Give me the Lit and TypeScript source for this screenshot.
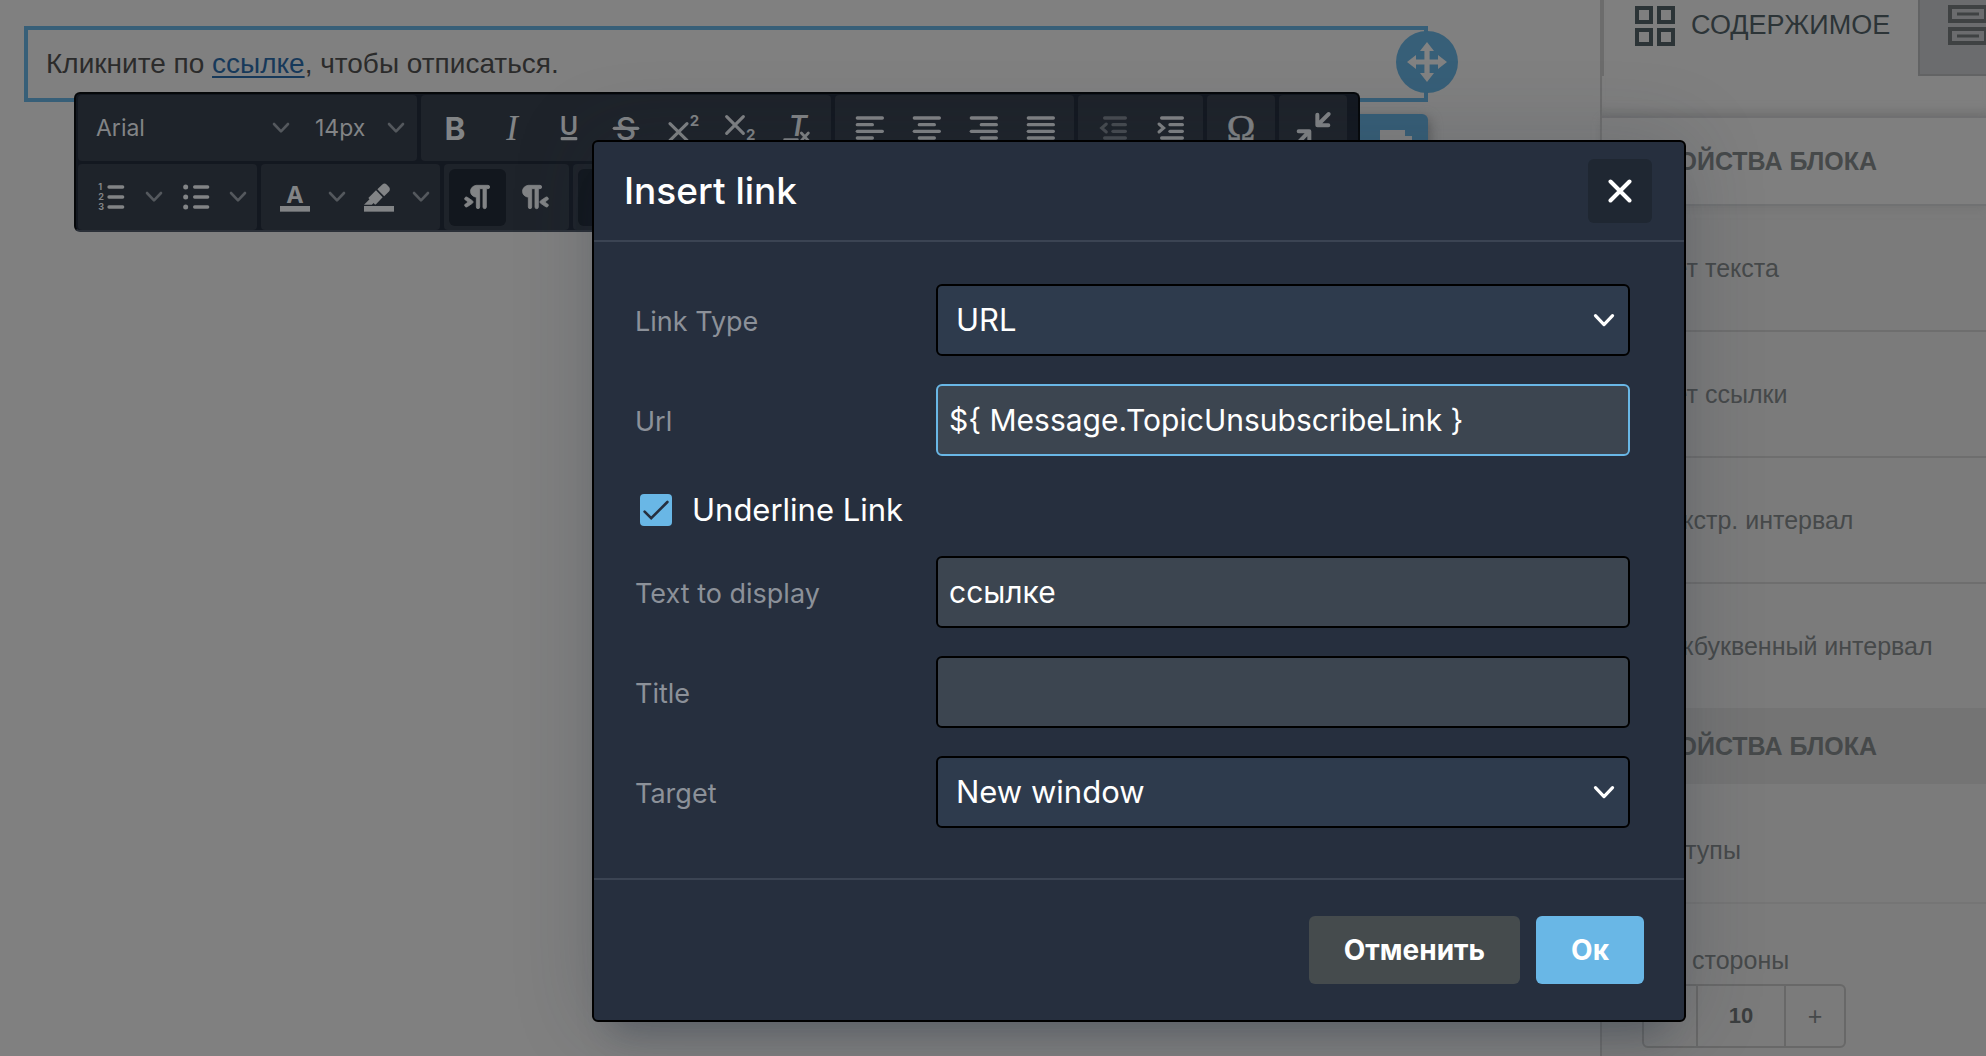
import { LitElement, html, svg, css, nothing } from 'lit';
import { customElement, property, state } from 'lit/decorators.js';

const bars = (rows: number[][]) => svg`<g stroke="currentColor" stroke-width="2" stroke-linecap="round">
  ${rows.map(([x1, x2, y]) => svg`<line x1=${x1} x2=${x2} y1=${y} y2=${y}></line>`)}
</g>`;

const ICONS: Record<string, unknown> = {
  bold: svg`<text x="12" y="19" font-size="19" font-weight="700" text-anchor="middle">B</text>`,
  italic: svg`<text class="serif" x="12" y="19" font-size="21" font-style="italic" text-anchor="middle">I</text>`,
  underline: svg`<text x="12" y="16" font-size="15" font-weight="600" text-anchor="middle">U</text>
    <rect x="7" y="17.4" width="10" height="2" rx="0.6"></rect>`,
  strike: svg`<text x="12" y="19" font-size="19" font-weight="500" text-anchor="middle">S</text>
    <rect x="4" y="11.2" width="16" height="2" rx="1"></rect>`,
  superscript: svg`<path d="M4.2 9.4l10.2 10M14.4 9.4l-10.2 10" stroke="currentColor" stroke-width="1.9" stroke-linecap="round"></path>
    <text x="16" y="11" font-size="9" font-weight="700">2</text>`,
  subscript: svg`<path d="M4 5.2l10 10M14 5.2l-10 10" stroke="currentColor" stroke-width="1.9" stroke-linecap="round"></path>
    <text x="15.6" y="19.2" font-size="9" font-weight="700">2</text>`,
  clear: svg`<text x="12.5" y="17" font-size="17" font-style="italic" font-weight="600" text-anchor="middle">T</text>
    <path d="M4.6 19h7.6M14.6 15l4.2 4.6M18.8 15l-4.2 4.6" stroke="currentColor" stroke-width="1.7" stroke-linecap="round"></path>`,
  left: bars([[5, 20, 6], [5, 14, 10], [5, 20, 14], [5, 14, 18]]),
  center: bars([[5, 20, 6], [8, 17, 10], [5, 20, 14], [8, 17, 18]]),
  right: bars([[5, 20, 6], [11, 20, 10], [5, 20, 14], [11, 20, 18]]),
  justify: bars([[5, 20, 6], [5, 20, 10], [5, 20, 14], [5, 20, 18]]),
  outdent: svg`${bars([[7.6, 20, 6], [12.6, 20, 10], [12.6, 20, 14], [7.6, 20, 18]])}
    <path d="M8.6 9.6L5.8 12l2.8 2.4" fill="none" stroke="currentColor" stroke-width="1.8" stroke-linecap="round"></path>`,
  indent: svg`${bars([[7.6, 20, 6], [12.6, 20, 10], [12.6, 20, 14], [7.6, 20, 18]])}
    <path d="M6 9.6L8.8 12 6 14.4" fill="none" stroke="currentColor" stroke-width="1.8" stroke-linecap="round"></path>`,
  omega: svg`<text class="serif" x="12" y="19.8" font-size="23" text-anchor="middle" stroke="currentColor" stroke-width="0.4">Ω</text>`,
  shrink: svg`<path d="M14.6 4v6.4h6.6M14.8 10.2L21.4 3.6M3.4 14h6.4v6.6M9.6 14.2L3 21" fill="none" stroke="currentColor" stroke-width="2.4" stroke-linecap="round" stroke-linejoin="round"></path>`,
  numbered: svg`${bars([[10.2, 18.4, 6], [10.2, 18.4, 12], [10.2, 18.4, 18]])}
    <text x="3.8" y="8" font-size="5.4" font-weight="700">1</text>
    <text x="3.8" y="14" font-size="5.4" font-weight="700">2</text>
    <text x="3.8" y="20" font-size="5.4" font-weight="700">3</text>`,
  bullets: svg`${bars([[11.2, 19, 6], [11.2, 19, 12], [11.2, 19, 18]])}
    <circle cx="5.8" cy="6" r="1.5"></circle><circle cx="5.8" cy="12" r="1.5"></circle><circle cx="5.8" cy="18" r="1.5"></circle>`,
  color: svg`<text x="12" y="15.4" font-size="14" font-weight="700" text-anchor="middle">A</text>
    <rect x="3" y="17.4" width="18" height="3.4"></rect>`,
  marker: svg`<path d="M7.7 16.7H3l3.3-3.3-.7-.8L10.2 8l4 4.1-4 4.2c-.2.2-.6.2-.8 0l-.6-.7-1.1 1.1zm5-7.5L11 7.4l3-2.9a2 2 0 012.6 0L18 6c.7.7.7 2 0 2.7l-2.9 2.9-2.4-2.4z"></path>
    <rect x="3" y="17.4" width="18" height="3.4"></rect>`,
  ltr: svg`<path d="M11 5h7a1 1 0 010 2h-1v11a1 1 0 01-2 0V7h-2v11a1 1 0 01-2 0v-6c-.5 0-1 0-1.4-.3A3.4 3.4 0 017.8 10a3.3 3.3 0 010-2.8 3.4 3.4 0 011.8-1.8L11 5zM4.4 16.2L6.2 15l-1.8-1.2a1 1 0 011.2-1.6l3 2a1 1 0 010 1.6l-3 2a1 1 0 11-1.2-1.6z" stroke="currentColor" stroke-width="0.5"></path>`,
  rtl: svg`<path d="M8 5h7a1 1 0 010 2h-1v11a1 1 0 01-2 0V7h-2v11a1 1 0 01-2 0v-6c-.5 0-1 0-1.4-.3A3.4 3.4 0 014.8 10a3.3 3.3 0 010-2.8 3.4 3.4 0 011.8-1.8L8 5zm11.6 11.2a1 1 0 11-1.2 1.6l-3-2a1 1 0 010-1.6l3-2a1 1 0 111.2 1.6L17.8 15l1.8 1.2z" stroke="currentColor" stroke-width="0.5"></path>`,
  link: svg`<path d="M10 14l4-4M9 11l-3 3a3 3 0 004 4l3-3M11 9l3-3a3 3 0 014 4l-3 3" fill="none" stroke="currentColor" stroke-width="2" stroke-linecap="round"></path>`,
};

const chevron = (cls: string) => html`<svg class=${cls} viewBox="0 0 18 12" aria-hidden="true">
  <path d="M2 2l7 7.4L16 2" fill="none" stroke="currentColor" stroke-width="2.6" stroke-linecap="round" stroke-linejoin="round"></path>
</svg>`;

interface Tool {
  icon: string;
  label: string;
  split?: boolean;
  active?: boolean;
  disabled?: boolean;
}

const TOP_GROUPS: Tool[][] = [
  [
    { icon: 'bold', label: 'Bold' },
    { icon: 'italic', label: 'Italic' },
    { icon: 'underline', label: 'Underline' },
    { icon: 'strike', label: 'Strikethrough' },
    { icon: 'superscript', label: 'Superscript' },
    { icon: 'subscript', label: 'Subscript' },
    { icon: 'clear', label: 'Clear formatting' },
  ],
  [
    { icon: 'left', label: 'Align left' },
    { icon: 'center', label: 'Align center' },
    { icon: 'right', label: 'Align right' },
    { icon: 'justify', label: 'Justify' },
  ],
  [
    { icon: 'outdent', label: 'Decrease indent', disabled: true },
    { icon: 'indent', label: 'Increase indent' },
  ],
  [{ icon: 'omega', label: 'Special character' }],
  [{ icon: 'shrink', label: 'Collapse' }],
];

const BOTTOM_GROUPS: Tool[][] = [
  [
    { icon: 'numbered', label: 'Numbered list', split: true },
    { icon: 'bullets', label: 'Bullet list', split: true },
  ],
  [
    { icon: 'color', label: 'Text color', split: true },
    { icon: 'marker', label: 'Background color', split: true },
  ],
  [
    { icon: 'ltr', label: 'Left to right', active: true },
    { icon: 'rtl', label: 'Right to left' },
  ],
  [{ icon: 'link', label: 'Link', active: true }],
];

@customElement('editor-toolbar')
export class EditorToolbar extends LitElement {
  static styles = css`
    :host {
      display: block;
      width: max-content;
      padding: 1px 11px 0 2px;
      border: 2px solid #050709;
      border-bottom-color: #2b3038;
      border-radius: 6px;
      background: #131820;
      color: #828486;
      font-family: Inter, 'Liberation Sans', sans-serif;
    }
    .row {
      display: flex;
      gap: 4px;
      margin-bottom: 3px;
    }
    .row:last-child {
      margin-bottom: 0;
    }
    .group {
      display: flex;
      align-items: center;
      height: 66px;
      padding: 0 6px 0 5px;
      border-radius: 4px;
      background: #1e232a;
    }
    .fonts {
      width: 328px;
    }
    button {
      display: flex;
      align-items: center;
      justify-content: center;
      height: 57px;
      padding: 0;
      border: 0;
      border-radius: 6px;
      background: none;
      color: inherit;
      font: inherit;
    }
    .tool {
      width: 57px;
    }
    .more {
      width: 27px;
    }
    .active {
      background: #12171e;
    }
    .disabled {
      color: #484c51;
    }
    .pick {
      justify-content: space-between;
      font-size: 23px;
      line-height: 32px;
    }
    .family {
      width: 217px;
      padding: 0 10px 0 13px;
    }
    .size {
      width: 111px;
      padding: 0 6px 0 15px;
    }
    .icon {
      width: 40px;
      height: 40px;
      fill: currentColor;
    }
    .serif {
      font-family: 'Liberation Serif', serif;
    }
    .chevron {
      width: 18px;
      height: 12px;
      color: #54585d;
    }
  `;

  private tool(t: Tool) {
    return html`<button
        class="tool ${t.active ? 'active' : ''} ${t.disabled ? 'disabled' : ''}"
        aria-label=${t.label}
        ?disabled=${t.disabled}
      >
        <svg class="icon" viewBox="0 0 24 24" aria-hidden="true">${ICONS[t.icon]}</svg>
      </button>
      ${t.split
        ? html`<button class="more" aria-label="${t.label} options">${chevron('chevron')}</button>`
        : nothing}`;
  }

  private groups(list: Tool[][]) {
    return list.map((g) => html`<div class="group">${g.map((t) => this.tool(t))}</div>`);
  }

  render() {
    return html`
      <div class="row">
        <div class="group fonts">
          <button class="pick family">Arial ${chevron('chevron')}</button>
          <button class="pick size">14px ${chevron('chevron')}</button>
        </div>
        ${this.groups(TOP_GROUPS)}
      </div>
      <div class="row">${this.groups(BOTTOM_GROUPS)}</div>
    `;
  }
}

@customElement('settings-panel')
export class SettingsPanel extends LitElement {
  static styles = css`
    :host {
      display: block;
      border-left: 2px solid #6c6c6c;
      background: #7b7b7b;
      color: #46494a;
      font: 25px/32px 'Liberation Sans', Arial, sans-serif;
    }
    .tabs {
      display: flex;
      height: 116px;
      overflow: hidden;
      background: #7f7f7f;
      border-bottom: 2px solid #6f6f71;
      box-shadow: inset 0 -12px 12px -10px #6c6c6c;
    }
    .tab {
      display: flex;
      flex: none;
      align-items: center;
      gap: 16px;
      box-sizing: border-box;
      height: 76px;
      padding: 0 28px 26px 31px;
      border: 0;
      border-left: 2px solid #6c6c6c;
      background: none;
      color: #2c3437;
      font: 27px/32px 'Liberation Sans', Arial, sans-serif;
    }
    .tab.other {
      padding-left: 28px;
      border-bottom: 2px solid #626364;
      border-left-color: #626364;
      background: #6b6c6e;
      color: #3f4243;
    }
    .tab-icon {
      width: 40px;
      height: 40px;
      margin-top: 2px;
    }
    h2 {
      display: flex;
      align-items: center;
      height: 76px;
      margin: 0;
      padding-left: 40px;
      background: #747474;
      font-size: 25px;
      line-height: 32px;
      font-weight: 700;
    }
    h2.raised {
      height: 86px;
      border-bottom: 2px solid #707172;
      background: #7f7f7f;
      box-shadow: 0 2px 8px #747474;
    }
    .row {
      display: flex;
      align-items: center;
      height: 124px;
      padding-left: 40px;
      border-bottom: 2px solid #6e6e6e;
    }
    .row.last {
      border-bottom: 0;
    }
    .row.spacing {
      height: 104px;
      padding-top: 14px;
      border-bottom-color: #757575;
    }
    .sides {
      padding: 40px 0 8px 40px;
    }
    .stepper {
      display: flex;
      width: 204px;
      height: 64px;
      margin-top: 8px;
      box-sizing: border-box;
      border: 2px solid #686868;
      border-radius: 6px;
    }
    .stepper button {
      width: 58px;
      padding: 0;
      border: 0;
      background: none;
      color: inherit;
      font: inherit;
    }
    .stepper .minus {
      width: 52px;
    }
    .stepper input {
      flex: 1;
      min-width: 0;
      padding: 0;
      border: solid #686868;
      border-width: 0 2px;
      border-radius: 0;
      background: none;
      color: #3b3e3f;
      font: 700 22px/32px 'Liberation Sans', Arial, sans-serif;
      text-align: center;
    }
  `;

  render() {
    return html`
      <div class="tabs" role="tablist">
        <button class="tab" role="tab" aria-selected="true">
          <svg class="tab-icon" viewBox="0 0 40 40" fill="none" stroke="currentColor" stroke-width="4" aria-hidden="true">
            <rect x="2" y="2" width="14" height="14"></rect>
            <rect x="24" y="2" width="14" height="14"></rect>
            <rect x="2" y="24" width="14" height="14"></rect>
            <rect x="24" y="24" width="14" height="14"></rect>
          </svg>
          СОДЕРЖИМОЕ
        </button>
        <button class="tab other" role="tab" aria-selected="false" aria-label="Rows">
          <svg class="tab-icon" viewBox="0 0 40 40" fill="none" stroke="currentColor" stroke-width="4" aria-hidden="true">
            <rect x="2" y="2" width="36" height="14"></rect>
            <rect x="2" y="24" width="36" height="14"></rect>
            <path d="M9 9h22M9 31h22" stroke-width="3"></path>
          </svg>
        </button>
      </div>
      <h2 class="raised">СВОЙСТВА БЛОКА</h2>
      <div class="row">Цвет текста</div>
      <div class="row">Цвет ссылки</div>
      <div class="row">Межстр. интервал</div>
      <div class="row last">Межбуквенный интервал</div>
      <h2>СВОЙСТВА БЛОКА</h2>
      <div class="row spacing">Отступы</div>
      <div class="sides">
        <label for="sides">Все стороны</label>
        <div class="stepper">
          <button class="minus" aria-label="Decrease">−</button>
          <input id="sides" value="10" />
          <button aria-label="Increase">+</button>
        </div>
      </div>
    `;
  }
}

@customElement('link-dialog')
export class LinkDialog extends LitElement {
  @property() url = '';
  @property() text = '';
  @state() private underline = true;

  static styles = css`
    :host {
      display: block;
      overflow: hidden;
      box-sizing: border-box;
      border: 2px solid #000;
      border-radius: 6px;
      background: #262f3e;
      color: #fff;
      font: 31px/40px Inter, 'Liberation Sans', sans-serif;
      box-shadow:
        0 32px 32px -20px rgba(34, 47, 62, 0.3),
        0 0 80px 2px rgba(34, 47, 62, 0.2);
    }
    header {
      display: flex;
      align-items: center;
      justify-content: space-between;
      height: 98px;
      padding: 0 32px 0 30px;
      border-bottom: 2px solid #3b4453;
    }
    h1 {
      margin: 0;
      font-size: 37px;
      line-height: 48px;
      font-weight: 500;
    }
    .close {
      display: flex;
      align-items: center;
      justify-content: center;
      width: 64px;
      height: 64px;
      padding: 0;
      border: 0;
      border-radius: 6px;
      background: #1f2732;
      color: #fff;
    }
    .cross {
      width: 24px;
      height: 24px;
    }
    .body {
      padding: 42px 54px 22px 41px;
    }
    .field {
      display: grid;
      grid-template-columns: 301px 1fr;
      align-items: center;
      margin-bottom: 28px;
    }
    .name {
      padding-top: 4px;
      color: #8c9199;
      font-size: 27px;
    }
    .box {
      display: grid;
      align-items: center;
    }
    .control {
      box-sizing: border-box;
      width: 100%;
      height: 72px;
      margin: 0;
      padding: 0 11px;
      border: 2px solid #000;
      border-radius: 6px;
      outline: 0;
      background: #3c4550;
      color: #fff;
      font: 30px/40px Inter, 'Liberation Sans', sans-serif;
    }
    .control.current {
      border-color: #69b7e6;
    }
    select.control {
      grid-area: 1 / 1;
      padding: 0 18px;
      appearance: none;
      background: #2e3b4d;
      font-size: 31px;
    }
    .arrow {
      grid-area: 1 / 1;
      justify-self: end;
      width: 22px;
      height: 15px;
      margin-right: 15px;
      pointer-events: none;
    }
    .check {
      display: flex;
      align-items: center;
      gap: 20px;
      height: 52px;
      margin-bottom: 20px;
      padding-left: 5px;
    }
    .tick-box {
      display: grid;
      width: 32px;
      height: 32px;
    }
    .tick-box input {
      grid-area: 1 / 1;
      width: 32px;
      height: 32px;
      margin: 0;
      border-radius: 4px;
      appearance: none;
      background: #3c4550;
    }
    .tick-box input:checked {
      background: #69b7e6;
    }
    .tick {
      grid-area: 1 / 1;
      width: 32px;
      height: 32px;
      pointer-events: none;
    }
    footer {
      display: flex;
      justify-content: flex-end;
      gap: 16px;
      padding: 36px 40px;
      border-top: 2px solid #3b4453;
    }
    .action {
      height: 68px;
      padding: 0 35px;
      border: 0;
      border-radius: 6px;
      background: #454b4d;
      color: #fff;
      font: 700 28px/40px Inter, 'Liberation Sans', sans-serif;
    }
    .primary {
      background: #69b7e6;
    }
  `;

  private selectField(id: string, name: string, value: string) {
    return html`<div class="field">
      <label class="name" for=${id}>${name}</label>
      <div class="box">
        <select class="control" id=${id}>
          <option>${value}</option>
        </select>
        ${chevron('arrow')}
      </div>
    </div>`;
  }

  private textField(id: string, name: string, value: string, current = false) {
    return html`<div class="field">
      <label class="name" for=${id}>${name}</label>
      <input class="control ${current ? 'current' : ''}" id=${id} type="text" .value=${value} />
    </div>`;
  }

  render() {
    return html`
      <header>
        <h1>Insert link</h1>
        <button class="close" aria-label="Close">
          <svg class="cross" viewBox="0 0 24 24" aria-hidden="true">
            <path d="M2.5 2.5l19 19M21.5 2.5l-19 19" stroke="currentColor" stroke-width="4" stroke-linecap="round"></path>
          </svg>
        </button>
      </header>
      <div class="body">
        ${this.selectField('type', 'Link Type', 'URL')}
        ${this.textField('url', 'Url', this.url, true)}
        <label class="check">
          <span class="tick-box">
            <input
              type="checkbox"
              .checked=${this.underline}
              @change=${() => (this.underline = !this.underline)}
            />
            ${this.underline
              ? html`<svg class="tick" viewBox="0 0 32 32" aria-hidden="true">
                  <path d="M4.6 17.6l6.6 6.6L27.4 8" fill="none" stroke="#262f3e" stroke-width="2.6" stroke-linecap="round"></path>
                </svg>`
              : nothing}
          </span>
          Underline Link
        </label>
        ${this.textField('text', 'Text to display', this.text)}
        ${this.textField('title', 'Title', '')}
        ${this.selectField('target', 'Target', 'New window')}
      </div>
      <footer>
        <button class="action">Отменить</button>
        <button class="action primary">Ок</button>
      </footer>
    `;
  }
}

@customElement('app-root')
export class AppRoot extends LitElement {
  static styles = css`
    :host {
      display: block;
    }
    .page {
      position: relative;
      display: grid;
      grid-template-columns: 1fr 386px;
      min-height: 100vh;
      overflow: hidden;
      background: #808080;
    }
    .canvas {
      padding: 26px 172px 0 24px;
    }
    .block {
      position: relative;
      padding: 16px 18px;
      border: 4px solid #375f78;
      color: #2b2b2b;
      font: 28px/36px 'Liberation Sans', Arial, sans-serif;
    }
    .block p {
      margin: 0;
    }
    .block a {
      color: #17395a;
      text-decoration-thickness: 2px;
      text-underline-offset: 3px;
    }
    .move {
      position: absolute;
      top: 1px;
      right: -34px;
      width: 62px;
      height: 62px;
      padding: 0;
      border: 0;
      border-radius: 50%;
      background: #375f78;
      color: #828282;
    }
    .actions {
      position: absolute;
      top: 84px;
      right: -4px;
      width: 96px;
      height: 60px;
      padding: 16px 16px 12px 48px;
      box-sizing: border-box;
      border: 0;
      border-radius: 6px;
      background: #375f78;
      color: #828282;
      box-shadow: 2px 4px 12px #5c5c5c;
    }
    .glyph {
      display: block;
      width: 100%;
    }
    .toolbar {
      position: absolute;
      top: 92px;
      left: 74px;
    }
    .dialog {
      position: absolute;
      top: 140px;
      right: 300px;
      left: 592px;
    }
  `;

  render() {
    return html`
      <div class="page">
        <main class="canvas">
          <div class="block">
            <p>Кликните по <a href="#unsubscribe">ссылке</a>, чтобы отписаться.</p>
            <button class="move" aria-label="Move block">
              <svg class="glyph" viewBox="0 0 62 62" fill="currentColor" aria-hidden="true">
                <path d="M31 11l7 9h-4.4v8.4H42V24l9 7-9 7v-4.4h-8.4V42H38l-7 9-7-9h4.4v-8.4H20V38l-9-7 9-7v4.4h8.4V20H24z"></path>
              </svg>
            </button>
            <button class="actions" aria-label="Duplicate block">
              <svg class="glyph" viewBox="0 0 32 32" fill="currentColor" aria-hidden="true">
                <path d="M0 0h25v6h7v26H8v-8H0z"></path>
              </svg>
            </button>
          </div>
        </main>
        <settings-panel></settings-panel>
        <editor-toolbar class="toolbar"></editor-toolbar>
        <link-dialog
          class="dialog"
          role="dialog"
          aria-label="Insert link"
          .url=${'${ Message.TopicUnsubscribeLink }'}
          .text=${'ссылке'}
        ></link-dialog>
      </div>
    `;
  }
}
